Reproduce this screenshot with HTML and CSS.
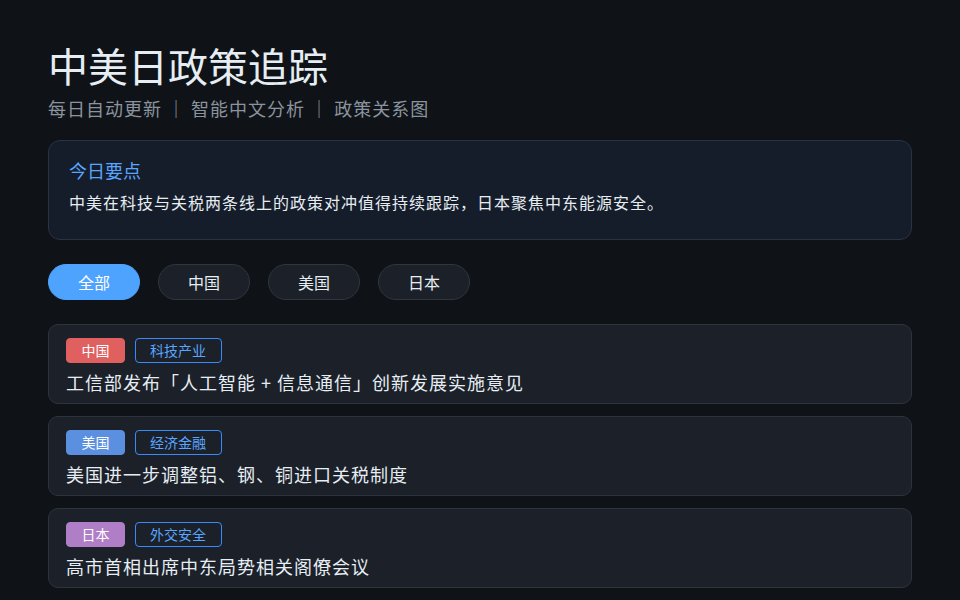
FILE: index.html
```html
<!DOCTYPE html>
<html lang="zh-CN">
<head>
  <meta charset="UTF-8">
  <meta name="viewport" content="width=device-width, initial-scale=1">
  <title>中美日政策追踪</title>
  <link rel="stylesheet" href="styles.css">
</head>
<body>

<header class="header">
  <h1>中美日政策追踪</h1>
  <p class="subtitle">每日自动更新 ｜ 智能中文分析 ｜ 政策关系图</p>
</header>

<section class="summary">
  <h2>今日要点</h2>
  <p>中美在科技与关税两条线上的政策对冲值得持续跟踪，日本聚焦中东能源安全。</p>
</section>

<nav class="filters">
  <button class="pill active">全部</button>
  <button class="pill">中国</button>
  <button class="pill">美国</button>
  <button class="pill">日本</button>
</nav>

<div class="list">
  <div class="item">
    <div class="tags">
      <span class="country cn">中国</span>
      <span class="topic">科技产业</span>
    </div>
    <div class="item-title">工信部发布「人工智能 + 信息通信」创新发展实施意见</div>
  </div>
  <div class="item">
    <div class="tags">
      <span class="country us">美国</span>
      <span class="topic">经济金融</span>
    </div>
    <div class="item-title">美国进一步调整铝、钢、铜进口关税制度</div>
  </div>
  <div class="item">
    <div class="tags">
      <span class="country jp">日本</span>
      <span class="topic">外交安全</span>
    </div>
    <div class="item-title">高市首相出席中东局势相关阁僚会议</div>
  </div>
</div>

</body>
</html>
```

FILE: styles.css
```css
body {
  margin: 0;
  padding: 41px 48px 20px;
  background: #0f1317;
  font-family: "Noto Sans CJK SC", "Noto Sans", sans-serif;
  color: #e6edf3;
}
h1 {
  margin: 0;
  font-size: 40px;
  font-weight: 400;
  line-height: 48px;
}
.subtitle {
  margin: 6px 0 0;
  font-size: 18px;
  line-height: 27px;
  color: #8b949e;
  letter-spacing: 1px;
}
.summary {
  margin-top: 18px;
  background: #161d2a;
  border: 1px solid #2b3340;
  border-radius: 12px;
  padding: 16px 20px 24px;
}
.summary h2 {
  margin: 0;
  font-size: 18px;
  font-weight: 400;
  line-height: 27px;
  color: #58a6ff;
}
.summary p {
  margin: 5px 0 0;
  font-size: 16px;
  line-height: 26px;
  letter-spacing: 1px;
}
.filters {
  display: flex;
  gap: 18px;
  margin-top: 24px;
}
.pill {
  font-family: inherit;
  font-size: 16px;
  line-height: 20px;
  padding: 7px 29px;
  border: 1px solid #30363d;
  border-radius: 18px;
  background: #1b2029;
  color: #e6edf3;
  cursor: pointer;
}
.pill.active {
  background: #4ea3ff;
  border-color: #4ea3ff;
  color: #fff;
}
.list {
  display: flex;
  flex-direction: column;
  gap: 12px;
  margin-top: 24px;
}
.item {
  background: #1b2029;
  border: 1px solid #2d333d;
  border-radius: 10px;
  padding: 13px 17px 7px;
}
.tags {
  display: flex;
  gap: 9.5px;
}
.country, .topic {
  font-size: 14px;
  line-height: 21px;
  padding: 1px 14.5px;
  border: 1px solid transparent;
  border-radius: 4px;
}
.country {
  color: #fff;
}
.country.cn { background: #e05f5f; border-color: #e05f5f; }
.country.us { background: #5b8fdf; border-color: #5b8fdf; }
.country.jp { background: #b07ec6; border-color: #b07ec6; }
.topic {
  color: #58a6ff;
  border-color: #388bfd;
}
.item-title {
  margin-top: 6px;
  font-size: 18px;
  line-height: 27px;
  letter-spacing: 1px;
}
```
